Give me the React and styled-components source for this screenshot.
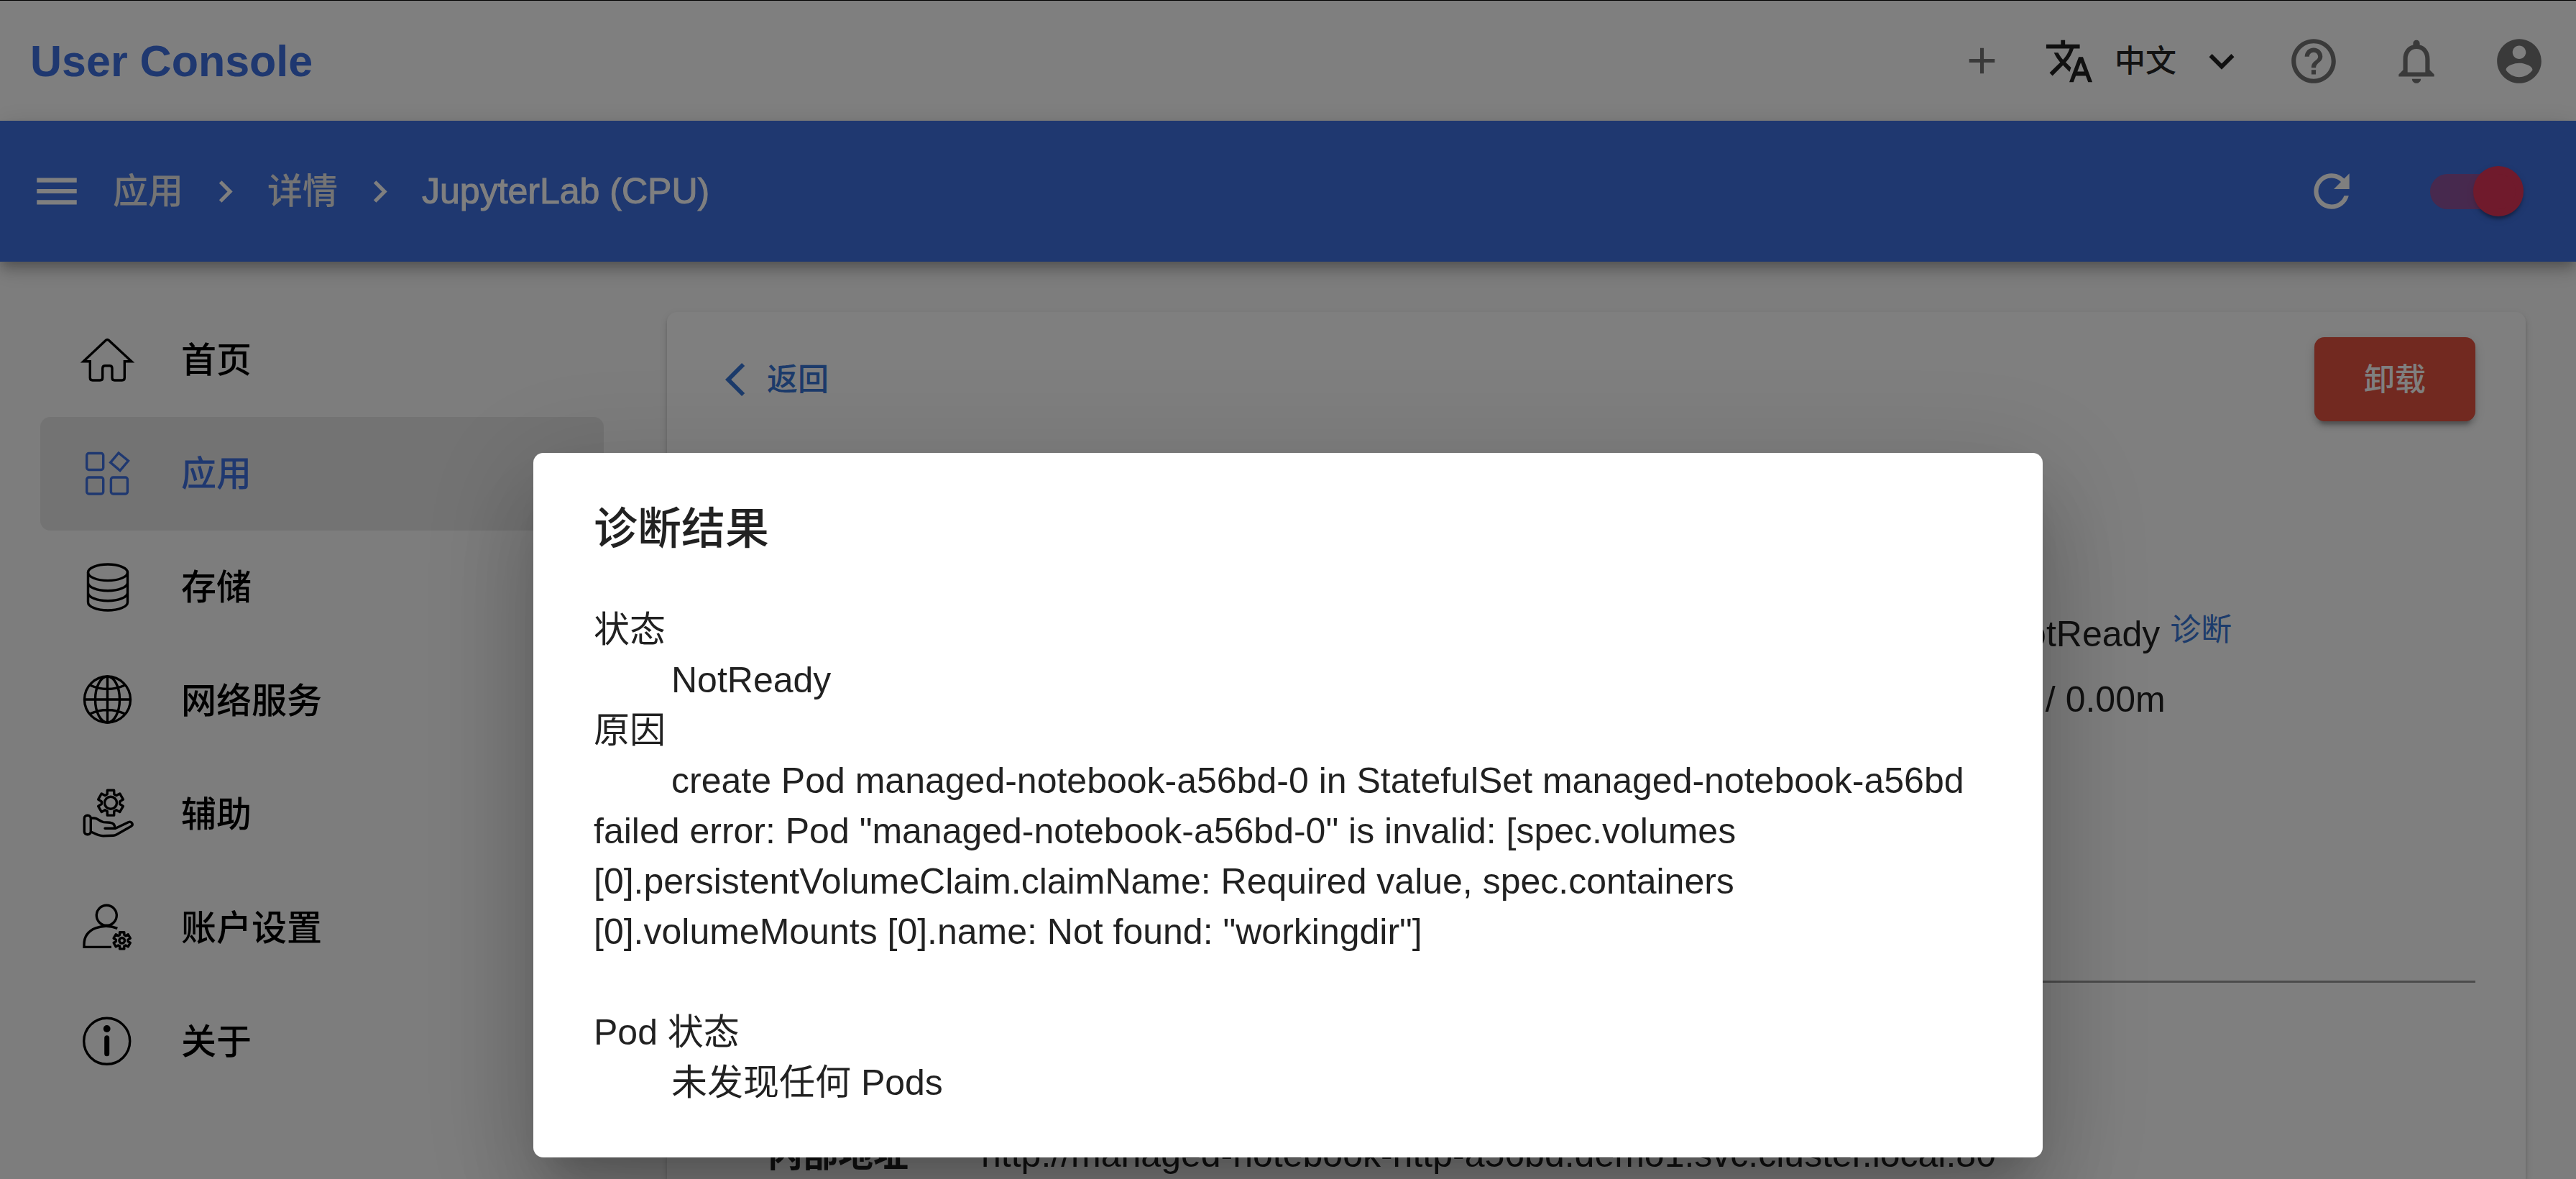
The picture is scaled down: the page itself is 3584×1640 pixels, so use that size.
import React, { useState } from "react";
import styled, { createGlobalStyle, css } from "styled-components";

const color = {
  primary: "#3e70e0",
  link: "#3876d6",
  danger: "#e45240",
  accent: "#e03458",
  page: "#fafafa",
  text: "rgba(0, 0, 0, 0.87)",
  icon: "rgba(0, 0, 0, 0.54)",
};

const size = { small: 43, nav: 49, body: 50, title: 61 };

const GlobalStyle = createGlobalStyle`
  *, *::before, *::after { box-sizing: border-box; }
  body {
    margin: 0;
    background: ${color.page};
    color: ${color.text};
    font-family: "Liberation Sans", "Noto Sans CJK SC", sans-serif;
    font-size: ${size.body}px;
    line-height: 70px;
  }
  a { text-decoration: none; }
  button { font: inherit; border: 0; padding: 0; background: none; color: inherit; cursor: pointer; }
`;

const Page = styled.div`
  display: flex;
  flex-direction: column;
  height: 100vh;
  overflow: hidden;
`;

const Header = styled.header`
  display: flex;
  align-items: center;
  justify-content: space-between;
  flex: none;
  height: 168px;
  padding: 0 42px;
  border-top: 1px solid #000;
  background: #fff;
`;

const Brand = styled.a`
  color: ${color.primary};
  font-size: ${size.title}px;
  font-weight: 700;
`;

const Actions = styled.div`
  display: flex;
  align-items: center;
  gap: ${(p) => p.$gap}px;
`;

const IconButton = styled.button`
  display: flex;
  color: ${(p) => p.$color || color.icon};
`;

const LanguageButton = styled.button`
  display: flex;
  align-items: center;
  gap: 28px;
  color: ${color.text};
  font-size: ${size.small}px;
  font-weight: 500;
`;

const Toolbar = styled.div`
  position: relative;
  display: flex;
  align-items: center;
  justify-content: space-between;
  flex: none;
  height: 196px;
  padding: 0 73px 0 42px;
  background: ${color.primary};
  color: #fff;
  box-shadow: 0 7px 14px -4px rgba(0, 0, 0, 0.2), 0 14px 18px 0 rgba(0, 0, 0, 0.14),
    0 4px 35px 0 rgba(0, 0, 0, 0.12);
`;

const Breadcrumb = styled.nav`
  display: flex;
  align-items: center;
  gap: 28px;
`;

const CrumbLink = styled.a`
  color: #e8e8e8;
  font-size: ${size.nav}px;
  font-weight: 500;
`;

const CrumbCurrent = styled.span`
  -webkit-text-stroke: 1px currentColor;
`;

const Switch = styled.input`
  appearance: none;
  display: grid;
  align-items: center;
  width: 130px;
  height: 70px;
  margin: 0;
  cursor: pointer;

  &::before,
  &::after {
    content: "";
    grid-area: 1 / 1;
  }
  &::before {
    width: 119px;
    height: 49px;
    border-radius: 25px;
    background: #000;
    opacity: 0.38;
  }
  &::after {
    width: 70px;
    height: 70px;
    border-radius: 50%;
    background: #fff;
    box-shadow: 0 7px 4px -4px rgba(0, 0, 0, 0.2), 0 4px 4px 0 rgba(0, 0, 0, 0.14),
      0 4px 11px 0 rgba(0, 0, 0, 0.12);
  }
  &:checked::before {
    background: ${color.accent};
    opacity: 0.5;
  }
  &:checked::after {
    justify-self: end;
    background: ${color.accent};
  }
`;

const Body = styled.div`
  display: flex;
  gap: 88px;
  flex: 1;
  min-height: 0;
  padding: 0 70px 0 56px;
`;

const Sidebar = styled.nav`
  flex: none;
  width: 784px;
  padding-top: 58px;
`;

const NavLink = styled.a`
  display: flex;
  align-items: center;
  gap: 66px;
  height: 158px;
  padding: 0 56px;
  border-radius: 14px;
  color: #000;
  font-size: ${size.nav}px;
  font-weight: 500;
  ${(p) =>
    p.$active &&
    css`
      color: ${color.primary};
      background: rgba(0, 0, 0, 0.08);
    `}
`;

const Card = styled.main`
  flex: 1;
  margin-top: 70px;
  padding: 35px 70px;
  border-radius: 14px 14px 0 0;
  background: #fff;
  box-shadow: 0 7px 4px -4px rgba(0, 0, 0, 0.2), 0 4px 4px 0 rgba(0, 0, 0, 0.14),
    0 4px 11px 0 rgba(0, 0, 0, 0.12);
`;

const CardHead = styled.div`
  display: flex;
  align-items: center;
  justify-content: space-between;
`;

const BackButton = styled.button`
  display: flex;
  align-items: center;
  gap: 2px;
  padding: 0 11px;
  color: ${color.link};
  font-size: ${size.small}px;
  font-weight: 500;
`;

const DangerButton = styled.button`
  width: 224px;
  height: 117px;
  border-radius: 14px;
  background: ${color.danger};
  color: #fff;
  font-size: ${size.small}px;
  font-weight: 500;
  box-shadow: 0 11px 4px -7px rgba(0, 0, 0, 0.2), 0 7px 7px 0 rgba(0, 0, 0, 0.14),
    0 4px 18px 0 rgba(0, 0, 0, 0.12);
`;

const Summary = styled.div`
  display: flex;
  flex-direction: column;
  gap: 21px;
  width: 751px;
  margin: 261px 0 356px auto;
`;

const SummaryRow = styled.div`
  display: flex;
  align-items: center;
  gap: 14px;
`;

const StatusDot = styled.span`
  width: 76px;
  height: 70px;
  border-radius: 35px;
  background: ${color.danger};
`;

const TextLink = styled.button`
  align-self: flex-start;
  color: ${color.link};
  font-size: ${size.small}px;
  line-height: 58px;
`;

const Divider = styled.hr`
  height: 3px;
  margin: 0;
  border: 0;
  background: #999;
`;

const AddressRow = styled.dl`
  display: flex;
  margin: 204px 0 0;
  padding-left: 70px;
`;

const AddressLabel = styled.dt`
  flex: none;
  width: 297px;
  font-size: ${size.nav}px;
  font-weight: 700;
`;

const AddressValue = styled.dd`
  margin: 0;
`;

const Backdrop = styled.div`
  position: fixed;
  inset: 1px 0 0;
  z-index: 10;
  display: flex;
  align-items: flex-start;
  justify-content: center;
  padding-top: 629px;
  background: rgba(0, 0, 0, 0.5);
`;

const Dialog = styled.section`
  width: 2100px;
  max-width: 90%;
  padding: 57px 84px 69px;
  border-radius: 14px;
  background: #fff;
  box-shadow: 0 39px 53px -25px rgba(0, 0, 0, 0.2), 0 84px 133px 11px rgba(0, 0, 0, 0.14),
    0 32px 161px 28px rgba(0, 0, 0, 0.12);
`;

const DialogTitle = styled.h2`
  margin: 0 0 56px;
  font-size: ${size.title}px;
  font-weight: 500;
  line-height: 98px;
`;

const Diagnosis = styled.dl`
  margin: 0;
  & + & {
    margin-top: 70px;
  }
`;

const Term = styled.dt``;

const Detail = styled.dd`
  margin: 0;
  text-indent: 108px;
`;

const glyphs = {
  add: "M19 13h-6v6h-2v-6H5v-2h6V5h2v6h6v2z",
  translate:
    "M12.87 15.07l-2.54-2.51.03-.03c1.74-1.94 2.98-4.17 3.71-6.53H17V4h-7V2H8v2H1v1.99h11.17C11.5 7.92 10.44 9.75 9 11.35 8.07 10.32 7.3 9.19 6.69 8h-2c.73 1.63 1.73 3.17 2.98 4.56l-5.09 5.02L4 19l5-5 3.11 3.11.76-2.04zM18.5 10h-2L12 22h2l1.12-3h4.75L21 22h2l-4.5-12zm-2.62 7l1.62-4.33L19.12 17h-3.24z",
  expand: "M16.59 8.59L12 13.17 7.41 8.59 6 10l6 6 6-6z",
  help: "M11 18h2v-2h-2v2zm1-16C6.48 2 2 6.48 2 12s4.48 10 10 10 10-4.48 10-10S17.52 2 12 2zm0 18c-4.41 0-8-3.59-8-8s3.59-8 8-8 8 3.59 8 8-3.59 8-8 8zm0-14c-2.21 0-4 1.79-4 4h2c0-1.1.9-2 2-2s2 .9 2 2c0 2-3 1.75-3 5h2c0-2.25 3-2.5 3-5 0-2.21-1.79-4-4-4z",
  bell: "M12 22c1.1 0 2-.9 2-2h-4c0 1.1.9 2 2 2zm6-6v-5c0-3.07-1.63-5.64-4.5-6.32V4c0-.83-.67-1.5-1.5-1.5s-1.5.67-1.5 1.5v.68C7.64 5.36 6 7.92 6 11v5l-2 2v1h16v-1l-2-2zm-2 1H8v-6c0-2.48 1.51-4.5 4-4.5s4 2.02 4 4.5v6z",
  account:
    "M12 2C6.48 2 2 6.48 2 12s4.48 10 10 10 10-4.48 10-10S17.52 2 12 2zm0 3c1.66 0 3 1.34 3 3s-1.34 3-3 3-3-1.34-3-3 1.34-3 3-3zm0 14.2c-2.5 0-4.71-1.28-6-3.22.03-1.99 4-3.08 6-3.08 1.99 0 5.97 1.09 6 3.08-1.29 1.94-3.5 3.22-6 3.22z",
  menu: "M3 18h18v-2H3v2zm0-5h18v-2H3v2zm0-7v2h18V6H3z",
  next: "M10 6L8.59 7.41 13.17 12l-4.58 4.59L10 18l6-6z",
  refresh:
    "M17.65 6.35C16.2 4.9 14.21 4 12 4c-4.42 0-7.99 3.58-7.99 8s3.57 8 7.99 8c3.73 0 6.84-2.55 7.73-6h-2.08c-.82 2.33-3.04 4-5.65 4-3.31 0-6-2.69-6-6s2.69-6 6-6c1.66 0 3.14.69 4.22 1.78L13 11h7V4l-2.35 2.35z",
  back: "M11.67 3.87L9.9 2.1 0 12l9.9 9.9 1.77-1.77L3.54 12z",
};

function Icon({ name, size: s = 74 }) {
  return (
    <svg width={s} height={s} viewBox="0 0 24 24" fill="currentColor" aria-hidden="true">
      <path d={glyphs[name]} />
    </svg>
  );
}

// Outline of a six-toothed cog centred on (cx, cy).
function cog(cx, cy, outer, root) {
  const points = [];
  for (let i = 0; i < 6; i += 1) {
    [
      [-22, root],
      [-15, outer],
      [15, outer],
      [22, root],
    ].forEach(([offset, r]) => {
      const a = ((i * 60 + offset - 90) * Math.PI) / 180;
      points.push(`${(cx + r * Math.cos(a)).toFixed(2)} ${(cy + r * Math.sin(a)).toFixed(2)}`);
    });
  }
  return `M${points.join("L")}Z`;
}

function NavIcon({ children }) {
  return (
    <svg
      width="74"
      height="74"
      viewBox="0 0 74 74"
      fill="none"
      stroke="currentColor"
      strokeWidth="3.4"
      strokeLinejoin="round"
      overflow="visible"
      aria-hidden="true"
    >
      {children}
    </svg>
  );
}

const navItems = [
  {
    label: "首页",
    icon: (
      <path
        strokeLinejoin="miter"
        d="M35.3 9.3Q37.3 7.6 39.3 9.3L71 38.7H61.3V61.5Q61.3 65 57.8 65H47.5Q44 65 44 61.5V48.2Q44 44.7 40.5 44.7H34.2Q30.7 44.7 30.7 48.2V61.5Q30.7 65 27.2 65H16.8Q13.3 65 13.3 61.5V38.7H4Z"
      />
    ),
  },
  {
    label: "应用",
    active: true,
    icon: (
      <>
        <rect x="8.7" y="8.5" width="23" height="23" rx="3" />
        <rect x="8.7" y="42" width="23" height="23" rx="3" />
        <rect x="42.4" y="42" width="23" height="23" rx="3" />
        <path strokeLinejoin="miter" d="M53 8L66.5 19L55 32.6L41.7 21.4Z" />
      </>
    ),
  },
  {
    label: "存储",
    icon: (
      <>
        <ellipse cx="38" cy="16.3" rx="27.5" ry="11.3" />
        <path d="M10.5 16.3V57.7A27.5 11.3 0 0 0 65.5 57.7V16.3M10.5 30.4A27.5 11.3 0 0 0 65.5 30.4M10.5 44.4A27.5 11.3 0 0 0 65.5 44.4" />
      </>
    ),
  },
  {
    label: "网络服务",
    icon: (
      <>
        <circle cx="37.5" cy="35" r="32" />
        <ellipse cx="37.5" cy="35" rx="17" ry="32" />
        <path d="M37.5 3V67M5.5 35H69.5M13 15Q37.5 26 62 15M13 55Q37.5 44 62 55" />
      </>
    ),
  },
  {
    label: "辅助",
    icon: (
      <>
        <path d={cog(42, 20.7, 18, 12.8)} />
        <circle cx="42" cy="20.7" r="8.5" />
        <rect x="5.3" y="38.3" width="9" height="26.5" rx="4" />
        <path
          strokeLinecap="round"
          d="M15 42H19C24 42 27 47 32 47.6L41 48.3Q48 49 48 56.3M34 56.3H48.7L67 47.5C71 46 74 51 70.7 53.2L50 65Q48 66.2 45.5 66.3L31.3 66.7C25 66.7 20 63.5 15 61.2"
        />
      </>
    ),
  },
  {
    label: "账户设置",
    icon: (
      <>
        <circle cx="36.3" cy="19.3" r="14" />
        <path strokeLinejoin="miter" d="M51.3 37.4C33 30 5 36 5 60V63.4H43" />
        <path d={cog(57.7, 54.3, 12, 8.4)} />
        <circle cx="57.7" cy="54.3" r="3.8" />
      </>
    ),
  },
  {
    label: "关于",
    icon: (
      <>
        <circle cx="36.7" cy="36.3" r="32" />
        <circle cx="36.7" cy="19" r="4.9" fill="currentColor" stroke="none" />
        <rect x="33.2" y="28.3" width="7" height="29" rx="3.5" fill="currentColor" stroke="none" />
      </>
    ),
  },
];

export default function App() {
  const [running, setRunning] = useState(true);

  return (
    <>
      <GlobalStyle />
      <Page>
        <Header>
          <Brand href="#">User Console</Brand>
          <Actions $gap={56}>
            <IconButton aria-label="新建">
              <Icon name="add" size={61} />
            </IconButton>
            <LanguageButton>
              <Icon name="translate" size={70} />
              中文
              <Icon name="expand" size={70} />
            </LanguageButton>
            <Actions $gap={69}>
              <IconButton aria-label="帮助">
                <Icon name="help" />
              </IconButton>
              <IconButton aria-label="通知">
                <Icon name="bell" />
              </IconButton>
              <IconButton aria-label="账户">
                <Icon name="account" />
              </IconButton>
            </Actions>
          </Actions>
        </Header>

        <Toolbar>
          <Actions $gap={41}>
            <IconButton aria-label="菜单" $color="#fff">
              <Icon name="menu" />
            </IconButton>
            <Breadcrumb aria-label="路径">
              <CrumbLink href="#apps">应用</CrumbLink>
              <Icon name="next" size={61} />
              <CrumbLink href="#detail">详情</CrumbLink>
              <Icon name="next" size={61} />
              <CrumbCurrent aria-current="page">JupyterLab (CPU)</CrumbCurrent>
            </Breadcrumb>
          </Actions>
          <Actions $gap={100}>
            <IconButton aria-label="刷新" $color="#fff">
              <Icon name="refresh" />
            </IconButton>
            <Switch
              type="checkbox"
              role="switch"
              aria-label="自动刷新"
              checked={running}
              onChange={(e) => setRunning(e.target.checked)}
            />
          </Actions>
        </Toolbar>

        <Body>
          <Sidebar>
            {navItems.map((item) => (
              <NavLink key={item.label} href={`#${item.label}`} $active={item.active}>
                <NavIcon>{item.icon}</NavIcon>
                {item.label}
              </NavLink>
            ))}
          </Sidebar>

          <Card>
            <CardHead>
              <BackButton>
                <Icon name="back" size={56} />
                返回
              </BackButton>
              <DangerButton>卸载</DangerButton>
            </CardHead>
            <Summary>
              <SummaryRow>
                <StatusDot />
                NotReady
                <TextLink>诊断</TextLink>
              </SummaryRow>
              <SummaryRow>0.00m / 0.00m</SummaryRow>
            </Summary>
            <Divider />
            <AddressRow>
              <AddressLabel>内部地址</AddressLabel>
              <AddressValue>http://managed-notebook-http-a56bd.demo1.svc.cluster.local:80</AddressValue>
            </AddressRow>
          </Card>
        </Body>
      </Page>

      <Backdrop>
        <Dialog role="dialog" aria-modal="true" aria-labelledby="diagnosis-title">
          <DialogTitle id="diagnosis-title">诊断结果</DialogTitle>
          <Diagnosis>
            <Term>状态</Term>
            <Detail>NotReady</Detail>
            <Term>原因</Term>
            <Detail>
              create Pod managed-notebook-a56bd-0 in StatefulSet managed-notebook-a56bd failed error:
              Pod "managed-notebook-a56bd-0" is invalid: [spec.volumes
              [0].persistentVolumeClaim.claimName: Required value, spec.containers [0].volumeMounts
              [0].name: Not found: "workingdir"]
            </Detail>
          </Diagnosis>
          <Diagnosis>
            <Term>Pod 状态</Term>
            <Detail>未发现任何 Pods</Detail>
          </Diagnosis>
        </Dialog>
      </Backdrop>
    </>
  );
}
